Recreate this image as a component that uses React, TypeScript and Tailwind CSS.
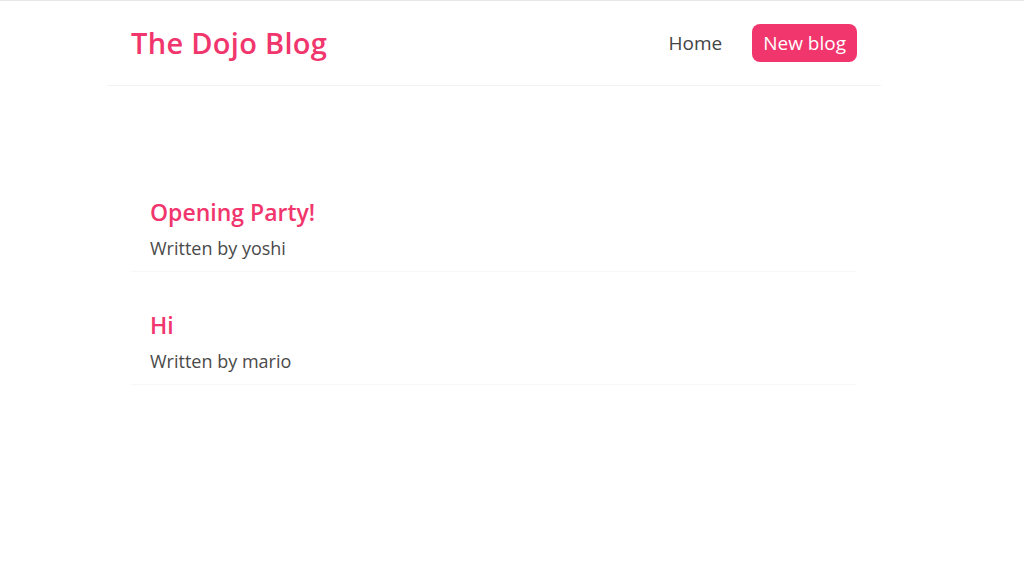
export default function App() {
  const blogs = [
    { title: "Opening Party!", author: "yoshi" },
    { title: "Hi", author: "mario" },
  ];
  return (
    <div className="min-h-[570px] w-full bg-white border-t border-[#e6e6e6] pr-[36px]" style={{ fontFamily: '"Open Sans", "Noto Sans", sans-serif' }}>
      <div className="mx-auto w-[774px]">
        <nav className="flex items-center h-[85px] px-6 border-b border-[#f2f2f2]">
          <h1 className="text-[29px] font-semibold text-[#f1356d] tracking-[0.3px]">The Dojo Blog</h1>
          <div className="ml-auto flex items-center">
            <a className="text-[19px] text-[#444] mr-[30px]">Home</a>
            <a className="text-[19px] text-white bg-[#f1356d] rounded-[8px] px-[11px] h-[38px] flex items-center">New blog</a>
          </div>
        </nav>
        <div className="px-6 pt-[101px]">
          {blogs.map((b) => (
            <div key={b.title} className="px-[19px] pt-[9px] pb-[9px] mb-[28px] border-b border-[#f7f7f7]">
              <h2 className="text-[23px] font-semibold text-[#f1356d] leading-[32px]">{b.title}</h2>
              <p className="text-[18px] text-[#4a4a4a] mt-[6px] leading-[28px]">Written by {b.author}</p>
            </div>
          ))}
        </div>
      </div>
    </div>
  );
}
